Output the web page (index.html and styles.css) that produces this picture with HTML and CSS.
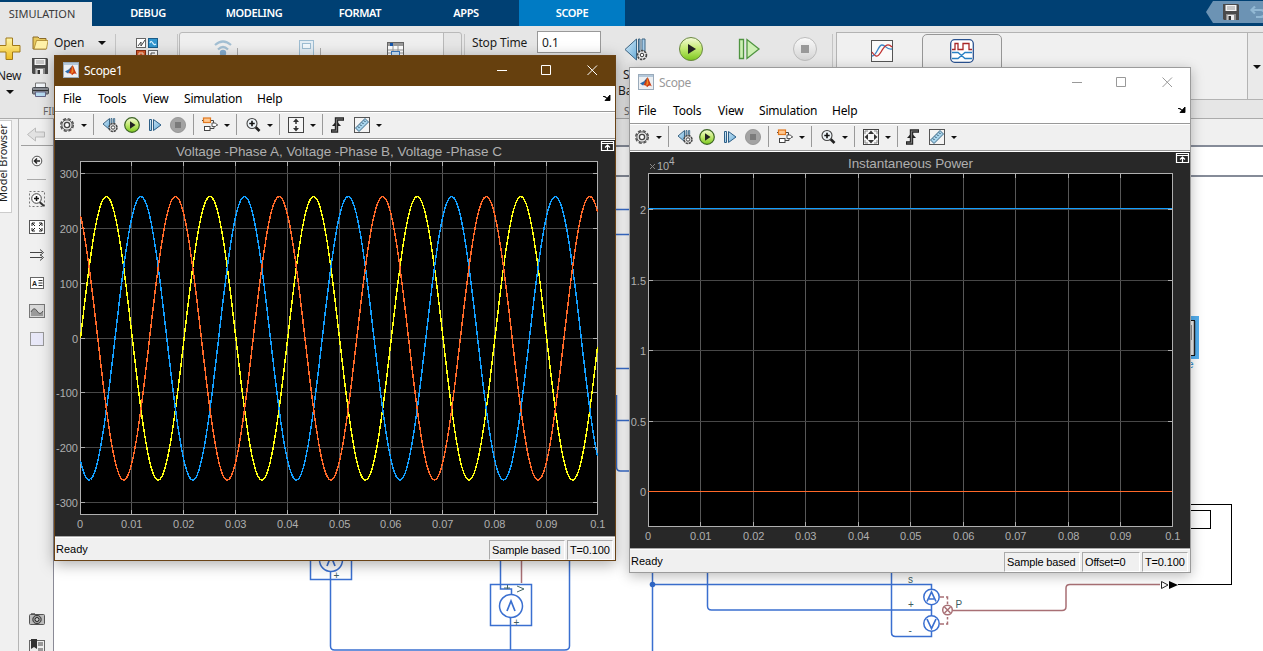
FILE: index.html
```html
<!DOCTYPE html>
<html lang="en">
<head>
<meta charset="utf-8">
<title>Scope1</title>
<link rel="stylesheet" href="styles.css">
</head>
<body>
<svg class="defs" width="0" height="0">
  <defs>
    <linearGradient id="gGreen" x1="0" y1="0" x2="0" y2="1"><stop offset="0" stop-color="#f4fbd8"/><stop offset=".45" stop-color="#c8ec78"/><stop offset="1" stop-color="#7cc81e"/></linearGradient>
    <linearGradient id="gBlue" x1="0" y1="0" x2="1" y2="1"><stop offset="0" stop-color="#d8ecf8"/><stop offset="1" stop-color="#68acd8"/></linearGradient>
    <linearGradient id="gGold" x1="0" y1="0" x2="0" y2="1"><stop offset="0" stop-color="#fff6a8"/><stop offset="1" stop-color="#eebb20"/></linearGradient>
    <linearGradient id="gGray" x1="0" y1="0" x2="0" y2="1"><stop offset="0" stop-color="#fafafa"/><stop offset="1" stop-color="#d4d4d4"/></linearGradient>
    <symbol id="gear" viewBox="0 0 16 16">
      <circle cx="8" cy="8" r="6.300" fill="none" stroke="#555" stroke-width="1.500" stroke-dasharray="3.200 1.750"/>
      <circle cx="8" cy="8" r="5.200" fill="#e4e4e4" stroke="#555"/><circle cx="8" cy="8" r="2.600" fill="#fff" stroke="#444" stroke-width="1.300"/>
    </symbol>
    <symbol id="back" viewBox="0 0 16 16">
      <path d="M7.500 1.500v11L1 7z" fill="url(#gBlue)" stroke="#3a6584"/><path d="M9 1.500h1v5H9zM11.500 1.500h1.200v4h-1.200z" fill="#a8d0ea" stroke="#3a6584" stroke-width=".8"/>
      <circle cx="11" cy="10.500" r="4" fill="#ddd" stroke="#444" stroke-width="1.500" stroke-dasharray="2.400 .7"/><circle cx="11" cy="10.500" r="1.700" fill="#fff" stroke="#444"/>
    </symbol>
    <symbol id="play" viewBox="0 0 16 16">
      <circle cx="8" cy="8" r="7.300" fill="url(#gGreen)" stroke="#3c6424" stroke-width="1.200"/><path d="M6 4.200v7.600L11.500 8z" fill="#222"/>
    </symbol>
    <symbol id="step" viewBox="0 0 16 16">
      <path d="M2.500 2.500h2v11h-2zM6.500 2.500v11l7.500-5.500z" fill="url(#gBlue)" stroke="#2c5e86"/>
    </symbol>
    <symbol id="stop" viewBox="0 0 16 16">
      <circle cx="8" cy="8" r="7.600" fill="#a3a3a3" stroke="#8f8f8f" stroke-width=".8"/><rect x="5" y="5" width="6" height="6" fill="#7b7b7b"/>
    </symbol>
    <symbol id="blocks" viewBox="0 0 16 16">
      <path d="M8.500 3.500h3v3M0 3.500h2M12 7.500v4H8M16 8h-2" fill="none" stroke="#444"/>
      <rect x="1.500" y="1" width="7" height="4.500" fill="#ffc890" stroke="#e07820" stroke-width="1.200"/>
      <path d="M10 6h3.500l1.500 1.800-1.500 1.700H10z" fill="#fff" stroke="#555"/><rect x="2.500" y="9.500" width="5.500" height="4" fill="#fff" stroke="#444"/>
    </symbol>
    <symbol id="zoomin" viewBox="0 0 16 16">
      <path d="M10.500 10l4 4" stroke="#222" stroke-width="2.600"/><circle cx="7" cy="6.500" r="5" fill="#eef4f8" stroke="#444" stroke-width="1.100"/>
      <path d="M7 3.800v5.400M4.300 6.500h5.400" stroke="#111" stroke-width="1.600"/>
    </symbol>
    <symbol id="fitY" viewBox="0 0 16 16">
      <rect x=".5" y=".5" width="15" height="15" fill="#f6f6f6" stroke="#444"/><path d="M8 1.500L11 5H5zM8 14.500L11 11H5z" fill="#333"/><path d="M8 4v3M8 9v3" stroke="#333" stroke-width="1.500"/>
    </symbol>
    <symbol id="fitXY" viewBox="0 0 16 16">
      <rect x=".5" y=".5" width="15" height="15" fill="#f6f6f6" stroke="#444"/><path d="M8 1.500L11 5H5zM8 14.500L11 11H5zM1.500 8L5 5v6zM14.500 8L11 5v6z" fill="#333"/><path d="M2 5V2h3M11 2h3v3M2 11v3h3M11 14h3v-3" fill="none" stroke="#888"/>
    </symbol>
    <symbol id="trigger" viewBox="0 0 16 16">
      <path d="M1 14h5.500V2H14" fill="none" stroke="#222" stroke-width="3.400"/><path d="M6.500 4l4.500 5H2z" fill="#222"/><path d="M2 14h4.500V2H13" fill="none" stroke="#777" stroke-width="1.200"/>
    </symbol>
    <symbol id="ruler" viewBox="0 0 16 16">
      <rect x=".5" y=".5" width="15" height="15" fill="#f4f4f4" stroke="#555"/><path d="M1.500 11L11 1.500l3.500 3.500L5 14.500z" fill="#a8d4ec" stroke="#3c6a88"/>
      <path d="M4 9.500l1.500 1.500M6 7.500L7.500 9M8 5.500L9.500 7M10 3.500l1.500 1.500" stroke="#24465e"/>
    </symbol>
    <symbol id="matlab" viewBox="0 0 16 16">
      <rect x=".5" y=".5" width="15" height="15" fill="#eceff2" stroke="#9aaaba"/><rect x="1" y="1" width="14" height="2" fill="#b4c8da"/>
      <path d="M2 9.500l4-2.200 1.500 1.500L5 11.500z" fill="#2a6cae"/><path d="M6 7.300L9.500 3.300 7.500 9z" fill="#34506e"/>
      <path d="M9.500 3.300c1.500 1.500 2.500 6 4.500 9.200-2-2-3.500-1-5 .8-.5-1.500-1.500-2-3.500-2z" fill="#cc3b12"/><path d="M9.500 3.500l1 6.500-2.500 2z" fill="#ef8a28"/>
    </symbol>
    <symbol id="floppy" viewBox="0 0 16 16">
      <path d="M0 0h15l1 1v15H1l-1-1z" fill="#4a4a4a"/><rect x="2.500" y="1" width="11" height="6" fill="#f4f4f4"/><path d="M4 3h8M4 5h8" stroke="#999"/>
      <rect x="3" y="10" width="10" height="6" fill="#8e8e8e"/><path d="M4.500 11H11v5H4.500z" fill="#eee"/><path d="M5.500 12H8v4H5.500z" fill="#333"/>
    </symbol>
    <symbol id="caret" viewBox="0 0 8 4"><path d="M0 0h8L4 4z" fill="#111"/></symbol>
  </defs>
</svg>

<div class="app">
  <nav class="tabs">
    <span class="tab tab-active">SIMULATION</span><span class="tab">DEBUG</span><span class="tab">MODELING</span><span class="tab">FORMAT</span><span class="tab">APPS</span><span class="tab tab-scope">SCOPE</span>
    <span class="quick">
      <svg width="57" height="22" viewBox="0 0 57 22"><path d="M0 11L7 0h50v22H7z" fill="#6c93b4"/><use href="#floppy" x="17" y="3" width="16" height="16"/><path d="M50 16h4c6 0 6-7 0-7h-8M49 5.500L45.500 9l3.500 3.500" fill="none" stroke="#92b8d4" stroke-width="2.200"/></svg>
    </span>
  </nav>

  <section class="ribbon">
    <div class="group group-new">
      <svg width="25" height="24" viewBox="0 0 25 24"><path d="M6 1h6.500v7.500H20V15h-7.500v7.500H6V15h-8V8.500h8z" fill="url(#gGold)" stroke="#a07818"/></svg>
      <span class="new-label">New</span>
      <svg width="8" height="4"><use href="#caret"/></svg>
    </div>
    <div class="group group-file">
      <div class="row"><svg width="16" height="14" viewBox="0 0 16 14"><path d="M1 13V1h5l1.500 1.500H14V13z" fill="#e8c95c" stroke="#8a6a28"/><path d="M2 13L4.500 4.500H16L14.500 13z" fill="#fff1a8" stroke="#a8842c" stroke-width=".8"/></svg><span class="open">Open</span><svg width="8" height="4"><use href="#caret"/></svg></div>
      <svg width="16" height="16"><use href="#floppy"/></svg>
      <svg class="printer" width="17" height="16" viewBox="0 0 17 16"><path d="M3.500 1h10v5h-10z" fill="#f2f6fa" stroke="#777"/><rect x=".5" y="5.500" width="16" height="6.500" rx="1" fill="#8a8e94" stroke="#4a4e54"/><path d="M1 8.500h15" stroke="#333"/><path d="M3.500 10h10v4.500h-10z" fill="#b8dcf2" stroke="#668"/></svg>
      <span class="caption">FILE</span>
    </div>
    <i class="rule"></i>
    <svg class="library" width="22" height="22" viewBox="0 0 22 22"><rect x=".5" y=".5" width="9" height="9" fill="#fff" stroke="#666"/><path d="M2 8L5 4v4l4-6" fill="none" stroke="#444"/><rect x="12.500" y=".5" width="9" height="9" fill="#3296cf" stroke="#1b5c88"/><path d="M14 5c2-5 3 4 6 1" fill="none" stroke="#d6f0ff" stroke-width="1.200"/><rect x=".5" y="12.500" width="9" height="9" fill="#d95b2a" stroke="#842a10"/><path d="M3 18v-3h4v3" fill="none" stroke="#ffe0c8"/><rect x="12.500" y="12.500" width="9" height="9" fill="#fff" stroke="#666"/><path d="M15 18v-3h4" fill="none" stroke="#555"/></svg>
    <i class="rule"></i>
    <div class="prepare">
      <svg width="280" height="32" viewBox="0 0 280 32"><g fill="none" stroke="#a4c0d4" stroke-width="2.200"><path d="M35 12q8-7 16 0M38 16.500q5-5 10 0"/></g><circle cx="43" cy="20" r="3.200" fill="#85add0"/><path d="M57.500 15v8M140.500 15v8" stroke="#aaa"/><rect x="119.500" y="7.500" width="14" height="20" fill="#e4eef5" stroke="#9ebdd2"/><rect x="122.500" y="10.500" width="8" height="5" fill="#f2f8fc" stroke="#9ebdd2"/><rect x="207.500" y="9.500" width="16" height="16" fill="#fff" stroke="#666"/><path d="M208 10h15v3h-15z" fill="#9a9a9a"/><path d="M210 10h3v3h-3z" fill="#1656aa"/><path d="M208 17h15M208 20h15M213 13v12M218 13v12" stroke="#999"/><rect x="211.500" y="18.500" width="8" height="6" fill="#cce4fa" stroke="#3978be"/></svg>
    </div>
    <i class="rule rule-stop"></i>
    <div class="stoptime"><span>Stop Time</span><span class="field">0.1</span></div>
    <div class="runs">
      <div class="run-back">
        <svg width="26" height="26" viewBox="0 0 26 26"><path d="M13.500 3v21L2 13.500z" fill="url(#gBlue)" stroke="#3c6482"/><path d="M15.500 3h1.500v12h-1.500zM19 3h3v12h-3z" fill="#a7cdea" stroke="#3c6482"/><circle cx="19" cy="19" r="4.400" fill="#eee" stroke="#444" stroke-width="1.700" stroke-dasharray="2.400 .8"/><circle cx="19" cy="19" r="1.800" fill="#fff" stroke="#333"/></svg>
        <span>Step</span><span>Back</span>
      </div>
      <svg class="run-play" width="26" height="26" viewBox="0 0 26 26"><circle cx="13" cy="13" r="11.500" fill="url(#gGreen)" stroke="#6b8844"/><path d="M10 8v10l8-5z" fill="#222"/></svg>
      <svg class="run-step" width="24" height="26" viewBox="0 0 24 26"><path d="M2.500 3.500h4v19h-4zM10 3.500v19L22 13z" fill="#cdf0b4" stroke="#4f9440" stroke-width="1.300"/></svg>
      <svg class="run-stop" width="26" height="26" viewBox="0 0 26 26"><circle cx="13" cy="13" r="11.500" fill="url(#gGray)" stroke="#bcbcbc"/><rect x="9" y="9" width="8" height="8" fill="#999"/></svg>
    </div>
    <span class="caption caption-sim">SIMULATE</span>
    <i class="rule rule-results"></i>
    <div class="results">
      <div class="results-body">
        <svg class="inspector" width="22" height="22" viewBox="0 0 22 22"><rect x=".5" y=".5" width="21" height="21" fill="#fafafa" stroke="#555"/><path d="M1 16c5 0 6-11 10-11s4 5 10 4" fill="none" stroke="#3a86c8" stroke-width="1.300"/><path d="M1 12c4 6 6 5 9 0s6-10 11-5" fill="none" stroke="#c03030" stroke-width="1.300"/></svg>
        <div class="logic"><svg width="24" height="24" viewBox="0 0 24 24"><rect x=".7" y=".7" width="22.600" height="22.600" rx="4" fill="#fff" stroke="#2a5290" stroke-width="1.300"/><path d="M2 10.500h3v-6h3v6h5v-6h6v6h3" fill="none" stroke="#a82828" stroke-width="1.300"/><path d="M2 13.500h6l7 6h7M2 19.500h6l7-6h7" fill="none" stroke="#2880c4" stroke-width="1.300"/></svg></div>
      </div>
      <div class="results-more"><svg width="8" height="4"><use href="#caret"/></svg></div>
    </div>
  </section>

  <main class="workspace">
    <aside class="browser"><span class="browser-tab">Model Browser</span></aside>
    <aside class="palette">
      <svg width="34" height="532" viewBox="19 119 34 532">
        <path d="M27.500 134.500l8-6.500v4h9v5h-9v4z" fill="#e2e2e2" stroke="#bbb"/>
        <path d="M21 145.500h32" stroke="#a0a0a0"/>
        <circle cx="37" cy="161" r="4.800" fill="#f5f5f5" stroke="#555"/><path d="M40 161h-5M37 158.500l-2.500 2.500 2.500 2.500" fill="none" stroke="#222" stroke-width="1.500"/>
        <path d="M27 179.500h19" stroke="#aaa"/>
        <rect x="29.500" y="191.500" width="15" height="15" fill="none" stroke="#777" stroke-dasharray="2 2"/><path d="M39.500 202l4.500 4" stroke="#333" stroke-width="2"/><circle cx="36.500" cy="198.500" r="4.800" fill="#fff" stroke="#444"/><path d="M36.500 196v5M34 198.500h5" stroke="#111" stroke-width="1.500"/>
        <rect x="29.500" y="220.500" width="15" height="13" fill="#fff" stroke="#555"/><path d="M32 226v-3h3M39 223h3v3M32 228v3h3M39 231h3v-3M32 223l3 3M42 223l-3 3M32 231l3-3M42 231l-3-3" fill="none" stroke="#222"/>
        <path d="M30 252.500h12M30 257.500h12M40 249.500l3.500 3-3.500 3M40 254.500l3.500 3-3.500 3" fill="none" stroke="#444"/>
        <rect x="30.500" y="277.500" width="13" height="11" fill="#fff" stroke="#666"/><text x="32" y="286" class="palette-a">A</text><path d="M38.500 280.500h4M38.500 283h4M38.500 285.500h4" stroke="#333"/>
        <rect x="29.500" y="304.500" width="15" height="13" fill="#d8d8d8" stroke="#777"/><path d="M31 316v-4q3-6 6-1t6 0v5z" fill="#9a9a9a"/><path d="M31 312q3-6 6-1t6 0" fill="none" stroke="#555"/>
        <rect x="30.500" y="332.500" width="13" height="13" fill="#e8e8f8" stroke="#999"/>
        <rect x="29.500" y="614.500" width="15" height="10" rx="1" fill="#bbb" stroke="#555"/><path d="M31 614h4" stroke="#555" stroke-width="1.500"/><circle cx="37" cy="619.500" r="4.200" fill="#999" stroke="#333"/><circle cx="37" cy="619.500" r="2" fill="#ccc" stroke="#222"/>
        <rect x="29.500" y="640.500" width="15" height="13" fill="#eee" stroke="#666"/><path d="M31 639h6v10l-3-2-3 2z" fill="#333"/><path d="M38 642h5v4h-5zM38 648h5v3h-5z" fill="#999"/>
      </svg>
    </aside>
    <div class="editor">
      <div class="editor-bar"></div>
      <div class="address"></div>
      <svg class="canvas" width="1209" height="474" viewBox="54 177 1209 474">
        <g fill="none" stroke="#3a6fd0" stroke-width="1.500">
          <path d="M600 209.500h40M600 234.500h40M600 368.500h40M600 420.500h40M616.500 395v72q0 4 4 4h20"/>
          <path d="M310.500 540v39.500h41V540"/><circle cx="331" cy="560" r="11.500"/>
          <path d="M330.500 572v74q0 4 4 4h230q5 0 5-4V540"/>
          <rect x="490.500" y="584.500" width="41" height="41"/><circle cx="511" cy="606" r="11.500"/>
          <path d="M500.500 540v49h11v5M510.500 618v32"/>
          <path d="M652.500 540v111M652.500 584.500h279v52h-36q-4 0-4-4V540M707.500 540v66q0 4 4 4h220"/>
        </g>
        <g fill="#fff" stroke="#3a6fd0" stroke-width="1.500"><circle cx="931.500" cy="597" r="7.700"/><circle cx="931.500" cy="623.500" r="7.700"/></g>
        <path d="M927 601.500l4.500-9.500 4.500 9.500M929 599h5M927 619l4.500 9.500L936 619M327 566l4-10 4 10M507 611l4-10 4 10" fill="none" stroke="#3a6fd0" stroke-width="1.700"/>
        <circle cx="652.500" cy="584.500" r="2.800" fill="#3068c8"/>
        <g fill="none" stroke="#a86f74" stroke-width="1.500"><path d="M521.500 540v43"/><path d="M940 597h7.500v7M940 624h7.500v-7" stroke-dasharray="4 2"/><circle cx="947.500" cy="610" r="4.800"/><path d="M944.500 607l6 6M950.500 607l-6 6M953 610.500h109q4 0 4-4V588q0-3.500 4-3.500h90"/></g>
        <g class="port"><text x="908" y="583">s</text><text x="908" y="608">+</text><text x="908.500" y="634">-</text><text x="955.500" y="608">P</text><text x="333.500" y="579">+</text><text x="513.500" y="626">+</text></g>
        <path d="M504 588h6M507.500 585v4M517 586l7 3-7 3" fill="none" stroke="#466"/>
        <path d="M1161.500 581.500l6.500 3.500-6.500 3.500z" fill="#fff" stroke="#222"/><path d="M1169 581l9 4-9 4z" fill="#000"/>
        <path d="M1178 584.500h53.500v-80H1180M1180 510.500h30.500v18H1180" fill="none" stroke="#000" shape-rendering="crispEdges"/>
        <rect x="1180" y="316" width="19" height="43" fill="#53aeee"/><rect x="1180" y="320.500" width="14.500" height="35" fill="#ececec" stroke="#111"/><path d="M1194.500 321v34" stroke="#222" stroke-width="1.500"/><path d="M1190.500 325v15" stroke="#333" stroke-width="2"/>
        <text x="1188" y="368" class="block-name">e</text>
      </svg>
    </div>
  </main>

  <section class="window window-active" data-plot="voltage">
    <header class="titlebar"><svg width="16" height="16"><use href="#matlab"/></svg><span class="window-title">Scope1</span><svg class="controls" width="106" height="16" viewBox="0 0 106 16"><path d="M3 8.500h10M47.500 3.500h9v9h-9zM93.500 3.500l9.500 9.500M103 3.500L93.500 13" fill="none" stroke="currentColor"/></svg></header>
    <div class="statusbar"><span class="ready">Ready</span><span class="cell cell-mode">Sample based</span><span class="cell cell-time">T=0.100</span></div>
  </section>

  <section class="window window-idle" data-plot="power">
    <header class="titlebar"><svg width="16" height="16"><use href="#matlab"/></svg><span class="window-title">Scope</span><svg class="controls" width="106" height="16" viewBox="0 0 106 16"><path d="M3 8.500h10M47.500 3.500h9v9h-9zM93.500 3.500l9.500 9.500M103 3.500L93.500 13" fill="none" stroke="currentColor"/></svg></header>
    <div class="statusbar"><span class="ready">Ready</span><span class="cell cell-mode">Sample based</span><span class="cell cell-offset">Offset=0</span><span class="cell cell-time">T=0.100</span></div>
  </section>
</div>

<template id="bars">
  <div class="menubar"><span class="m-file">File</span><span class="m-tools">Tools</span><span class="m-view">View</span><span class="m-sim">Simulation</span><span>Help</span><svg class="dock" width="8" height="6" viewBox="0 0 8 6"><path d="M0 1.500h2l3 2.500M7 0v5.500H2z" fill="#000" stroke="#000" stroke-width=".9"/></svg></div>
  <div class="toolbar">
    <svg class="ico"><use href="#gear"/></svg><svg class="drop"><use href="#caret"/></svg><i></i>
    <svg class="ico after"><use href="#back"/></svg><svg class="ico i-play"><use href="#play"/></svg><svg class="ico i-step"><use href="#step"/></svg><svg class="ico i-step"><use href="#stop"/></svg><i class="wide"></i>
    <svg class="ico after"><use href="#blocks"/></svg><svg class="drop"><use href="#caret"/></svg><i></i>
    <svg class="ico after"><use href="#zoomin"/></svg><svg class="drop"><use href="#caret"/></svg><i></i>
    <svg class="ico after"><use class="fit" href="#fitY"/></svg><svg class="drop"><use href="#caret"/></svg><i></i>
    <svg class="ico i-step"><use href="#trigger"/></svg><svg class="ico after"><use href="#ruler"/></svg><svg class="drop"><use href="#caret"/></svg>
  </div>
</template>
<script src="app.js"></script>
</body>
</html>
```

FILE: styles.css
```css
* { box-sizing: border-box; }
body { margin: 0; overflow: hidden; font-family: "Noto Sans", "Open Sans", sans-serif; font-size: 12px; color: #1c1c1c; }
svg { display: block; flex: none; }
.defs { position: absolute; }
.app { position: relative; width: 1263px; height: 651px; display: flex; flex-direction: column; overflow: hidden; background: #fff; }

.tabs { height: 26px; display: flex; background: #004073; flex: none; }
.tab { width: 106px; height: 26px; line-height: 26px; text-align: center; color: #fff; font-size: 11px; font-weight: 600; letter-spacing: -0.4px; }
.tab-active { width: 92px; height: 24px; line-height: 23px; margin: 2px 3px 0 0; padding-right: 8px; background: #e6e6e6; color: #3a3a3a; font-weight: 400; letter-spacing: 0; }
.tab-scope { width: 106px; background: #007bc4; }
.quick { margin: 1px 0 0 auto; }

.ribbon { height: 93px; flex: none; display: flex; align-items: flex-start; background: #e6e6e6; border-bottom: 1px solid #ababab; white-space: nowrap; }
.group { display: flex; flex-direction: column; }
.group-new { width: 32px; padding-top: 11px; gap: 0; }
.new-label { margin: 6px 0 5px -3px; line-height: 18px; font-size: 12px; letter-spacing: -0.3px; }
.group-new > svg:last-child { margin-left: 6px; }
.group-file { width: 83px; padding-top: 8px; }
.row { display: flex; align-items: center; height: 18px; }
.group-file > svg { margin-top: 6px; }
.group-file > .printer { margin-top: 8px; }
.open { width: 44px; padding-left: 6px; margin-right: 6px; letter-spacing: -0.2px; line-height: 16px; margin-bottom: 1px; }
.caption { font-size: 10px; color: #666; line-height: 14px; }
.group-file .caption { margin: 6px 0 0 11px; }
.rule { width: 1px; height: 66px; margin-top: 8px; background: #c4c4c4; flex: none; }
.library { margin: 12px 19px 0 20px; }
.prepare { width: 283px; height: 68px; margin: 6px 0 0 1px; border: 1px solid #b9b9b9; border-radius: 3px; background: linear-gradient(90deg, #efefef 263px, #b9b9b9 263px, #b9b9b9 264px, #e6e6e6 264px); overflow: hidden; }
.rule-stop { margin-left: 2px; }
.stoptime { width: 140px; display: flex; align-items: center; padding: 5px 0 0 7px; gap: 12px; }
.field { width: 64px; height: 22px; border: 1px solid #999; background: #fff; padding-left: 4px; line-height: 21px; }
.stoptime > span:first-child { width: 53px; letter-spacing: -0.15px; }
.runs { width: 227px; display: flex; align-items: flex-start; padding: 10px 0 0 18px; }
.run-back { display: flex; flex-direction: column; width: 36px; text-align: left; line-height: 16px; }
.run-back span:nth-child(2) { margin-top: 5px; }
.run-back span:nth-child(3) { margin-left: -5px; }
.run-play { margin-left: 19px; }
.run-step { margin-left: 33px; }
.run-stop { margin-left: 31px; }
.caption-sim { width: 0; overflow: visible; margin: 78px 0 0 -208px; padding: 0; }
.rule-results { margin-left: 208px; }
.results { flex: 1; height: 68px; margin: 6px 0 0 3px; border: 1px solid #b3b3b3; border-right: 0; display: flex; background: #f0f0f0; }
.results-body { flex: 1; display: flex; padding: 1px 0 0 34px; }
.inspector { margin-top: 6px; }
.logic { width: 80px; height: 66px; margin-left: 29px; border: 1px solid #969696; border-radius: 5px; background: #eee; padding: 4px 0 0 27px; }
.results-more { width: 16px; border-left: 1px solid #b3b3b3; background: #eaeaea; padding: 32px 0 0 5px; }

.workspace { flex: 1; display: flex; min-height: 0; }
.browser { width: 19px; background: #f0f0f0; border-right: 1px solid #b5b5b5; overflow: hidden; }
.browser-tab { display: flex; align-items: center; width: 12px; height: 93px; margin-top: 1px; padding-top: 10px; background: #fff; border: 1px solid #ccc; border-right: 0; writing-mode: vertical-rl; transform: rotate(180deg); line-height: 11px; font-size: 11px; white-space: nowrap; text-indent: 0; padding-left: 7px; }
.palette { width: 35px; background: #f0f0f0; border-right: 1px solid #8a8a96; }
.palette-a { font: bold 7px "Liberation Sans", sans-serif; fill: #222; }
.editor { flex: 1; display: flex; flex-direction: column; min-width: 0; }
.editor-bar { height: 28px; background: #f0f0f0; border-bottom: 2px solid #858b98; flex: none; }
.address { height: 30px; background: #fff; border-bottom: 2px solid #858b98; flex: none; }
.port { font: 10px "Liberation Sans", sans-serif; fill: #3d5c60; }
.block-name { font: 10px "Liberation Sans", sans-serif; fill: #2284c8; }

.window { position: absolute; width: 562px; height: 506px; display: flex; flex-direction: column; border: 1px solid; background: #f0f0f0; }
.window-active { left: 54px; top: 55px; border-color: #6a4316; box-shadow: 0 3px 14px rgba(0,0,0,.34); }
.window-idle { left: 629px; top: 67px; border-color: #9b9b9b; box-shadow: 0 3px 12px rgba(0,0,0,.27); }
.titlebar { height: 30px; flex: none; display: flex; align-items: center; padding: 0 15px 2px 8px; }
.window-active .titlebar { background: #66400e; color: #fff; }
.window-idle .titlebar { background: #fff; color: #999; }
.window-title { margin-left: 5px; letter-spacing: -0.35px; }
.controls { margin-left: auto; }
.menubar { height: 25px; flex: none; display: flex; align-items: center; background: #fff; padding: 0 4px 1px 8px; letter-spacing: -0.2px; color: #000; }
.m-file { width: 35px; } .m-tools { width: 45px; } .m-view { width: 41px; } .m-sim { width: 73px; }
.dock { margin-left: auto; }
.toolbar { height: 29px; flex: none; display: flex; align-items: center; padding: 0 0 2px 4px; border-top: 1px solid #999; border-bottom: 1px solid #fff; box-shadow: inset 0 1px #fff, inset 0 -1px #999; }
.ico { width: 16px; height: 16px; }
.drop { width: 6px; height: 3px; margin: 1px 6px 0; }
.toolbar i { width: 1px; height: 21px; background: #999; }
.toolbar .wide { margin-left: 7px; }
.after { margin-left: 8px; } .i-play { margin-left: 6px; } .i-step { margin-left: 7px; }
.plot { background: #282828; font-family: "Liberation Sans", Arial, sans-serif; }
.tick { font-size: 11px; fill: #afafaf; }
.exp { font-size: 10px; fill: #afafaf; }
.plot-title { font-size: 13.5px; fill: #afafaf; }
.statusbar { flex: 1; display: flex; border-top: 1px solid #aaa; box-shadow: inset 0 1px #fff; padding: 3px 2px 1px 1px; font: 11px/18px "Liberation Sans", Arial, sans-serif; color: #000; }
.ready { flex: 1; line-height: 19px; }
.cell { border: 1px solid #fff; border-top-color: #aaa; border-left-color: #aaa; padding-left: 2px; margin-left: 2px; letter-spacing: -0.15px; white-space: nowrap; }
.cell-mode { width: 76px; } .cell-offset { width: 58px; } .cell-time { width: 46px; }
```

FILE: app.js
```js
// Builds the menu, toolbar and axes of each scope window.
const plots = {
  voltage: {
    title: 'Voltage -Phase A, Voltage -Phase B, Voltage -Phase C', titleWidth: 326, titleX: 284,
    box: [25, 21, 542, 374],
    xs: [76, 128, 180, 232, 284, 335, 387, 439, 491],
    ys: [[33, '300'], [88, '200'], [143, '100'], [198, '0'], [252, '-100'], [307, '-200'], [362, '-300']],
    waves: [['#ffff13', 0], ['#139fff', 1], ['#ff6929', 2]]
  },
  power: {
    title: 'Instantaneous Power', titleWidth: 125, titleX: 280.5,
    box: [18, 21, 542, 374],
    xs: [70, 123, 175, 228, 280, 333, 385, 438, 490],
    ys: [[57, '2'], [128, '1.5'], [198, '1'], [269, '0.5'], [339, '0']],
    levels: [['#ff6929', 339], ['#139fff', 56]], exponent: true, fit: '#fitXY'
  }
};

const line = (x1, y1, x2, y2, c) =>
  `<path d="M${x1 + (x1 === x2 ? .5 : 0)} ${y1 + (y1 === y2 ? .5 : 0)}L${x2 + (x1 === x2 ? .5 : 0)} ${y2 + (y1 === y2 ? .5 : 0)}" stroke="${c}" fill="none" shape-rendering="crispEdges"/>`;

function draw(p) {
  const [l, t, r, b] = p.box;
  let s = `<rect x="${l}" y="${t}" width="${r - l}" height="${b - t}" fill="#000"/>`;
  p.xs.forEach(x => s += line(x, t, x, b, '#575757'));
  p.ys.forEach(([y]) => s += line(l, y, r, y, '#474747'));
  s += `<rect x="${l + .5}" y="${t + .5}" width="${r - l}" height="${b - t}" fill="none" stroke="#afafaf" shape-rendering="crispEdges"/>`;
  p.xs.forEach(x => s += line(x, t, x, t + 5, '#afafaf') + line(x, b - 4, x, b, '#afafaf'));
  p.ys.forEach(([y]) => s += line(l, y, l + 5, y, '#afafaf') + line(r - 4, y, r, y, '#afafaf'));
  (p.waves || []).forEach(([c, k]) => {
    let pts = '';
    for (let x = 0; x <= r - l; x++) {
      const y = 198.3 - 141.7 * Math.sin(x / (r - l + 1) * 10 * Math.PI - k * 2 * Math.PI / 3);
      pts += `${l + x + .5},${y.toFixed(2)} `;
    }
    s += `<polyline points="${pts}" fill="none" stroke="${c}" stroke-width="1.45" shape-rendering="crispEdges"/>`;
  });
  (p.levels || []).forEach(([c, y]) => s += line(l, y, r, y, c));
  [l, ...p.xs, r].forEach((x, i) => {
    const label = i === 0 ? '0' : i === 10 ? '0.1' : '0.0' + i;
    s += `<text class="tick" x="${x + (i ? .8 : 0)}" y="${b + 14}" text-anchor="middle">${label}</text>`;
  });
  p.ys.forEach(([y, label]) => s += `<text class="tick" x="${l - 2}" y="${y + 4.6}" text-anchor="end">${label}</text>`);
  if (p.exponent) s += `<path d="M20 12l5 5M25 12l-5 5" stroke="#888"/><text class="tick" x="27" y="18">10</text><text class="exp" x="39" y="13">4</text>`;
  s += `<text class="plot-title" x="${p.titleX}" y="16" text-anchor="middle" textLength="${p.titleWidth}">${p.title}</text>`;
  s += `<path d="M546.500 1.500h12v9h-12zM546.500 3.500h12M552.500 10V5M550 7.500l2.500-2.500 2.500 2.500" fill="none" stroke="#fff" stroke-width="1.200"/>`;
  return `<svg class="plot" width="560" height="396" viewBox="0 0 560 396">${s}</svg>`;
}

document.querySelectorAll('.window').forEach(win => {
  const p = plots[win.dataset.plot];
  const bars = document.getElementById('bars').content.cloneNode(true);
  if (p.fit) bars.querySelector('.fit').setAttribute('href', p.fit);
  const status = win.querySelector('.statusbar');
  win.insertBefore(bars, status);
  status.insertAdjacentHTML('beforebegin', draw(p));
});
```
